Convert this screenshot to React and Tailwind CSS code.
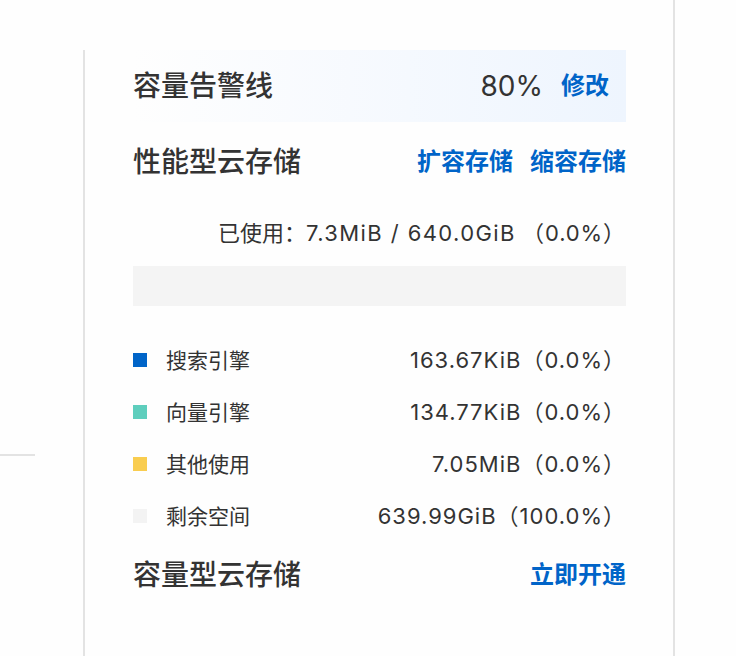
export default function App() {
  const font = {
    fontFamily: '"Inter", "Noto Sans CJK SC", sans-serif',
  };
  const rows = [
    { color: "bg-[#0064c8]", label: "搜索引擎", value: "163.67KiB（0.0%）" },
    { color: "bg-[#5ecebd]", label: "向量引擎", value: "134.77KiB（0.0%）" },
    { color: "bg-[#f9cd50]", label: "其他使用", value: "7.05MiB（0.0%）" },
    { color: "bg-[#f3f3f3]", label: "剩余空间", value: "639.99GiB（100.0%）" },
  ];
  return (
    <div
      className="flex min-h-[656px] w-[736px] bg-[#fefefe] text-[#333333]"
      style={font}
    >
      <div className="flex w-[675px] border-r-2 border-[#e3e3e3]">
        <div className="w-[83px] shrink-0 pt-[454px]">
          <div className="h-[2px] w-[35px] bg-[#e3e3e3]" />
        </div>
        <div className="mt-[50px] flex-1 border-l-2 border-[#e3e3e3] pl-[48px] pr-[47px]">
          <div className="flex h-[72px] items-center justify-between bg-gradient-to-r from-[#fefefe] to-[#eef5fe] pr-[17px]">
            <span className="text-[28px] font-medium leading-none">容量告警线</span>
            <div className="flex items-center gap-[18px]">
              <span className="text-[28px] leading-none">80%</span>
              <span className="text-[24px] font-semibold leading-none text-[#0064c8]">修改</span>
            </div>
          </div>
          <div className="mt-[20px] flex h-[40px] items-center justify-between">
            <span className="text-[28px] font-medium leading-none">性能型云存储</span>
            <div className="flex items-center gap-[17px] text-[24px] font-semibold leading-none text-[#0064c8]">
              <span>扩容存储</span>
              <span>缩容存储</span>
            </div>
          </div>
          <div className="mt-[31px] flex h-[40px] items-center justify-end text-[22px] leading-none">
            <span>
              已使用：<span className="tracking-[1.4px]">7.3MiB / 640.0GiB</span>{" "}
              <span className="tracking-[0.9px]">（0.0%）</span>
            </span>
          </div>
          <div className="mt-[13px] h-[40px] bg-[#f4f4f4]" />
          <div className="mt-[28px] flex flex-col">
            {rows.map((r) => (
              <div key={r.label} className="flex h-[52px] items-center justify-between">
                <div className="flex items-center gap-[19px]">
                  <span className={`h-[14px] w-[14px] ${r.color}`} />
                  <span className="text-[21px] leading-none">{r.label}</span>
                </div>
                <span className="text-[22px] leading-none tracking-[1px]">{r.value}</span>
              </div>
            ))}
          </div>
          <div className="mt-[13px] flex h-[40px] items-center justify-between">
            <span className="text-[28px] font-medium leading-none">容量型云存储</span>
            <span className="text-[24px] font-semibold leading-none text-[#0064c8]">立即开通</span>
          </div>
        </div>
      </div>
    </div>
  );
}
